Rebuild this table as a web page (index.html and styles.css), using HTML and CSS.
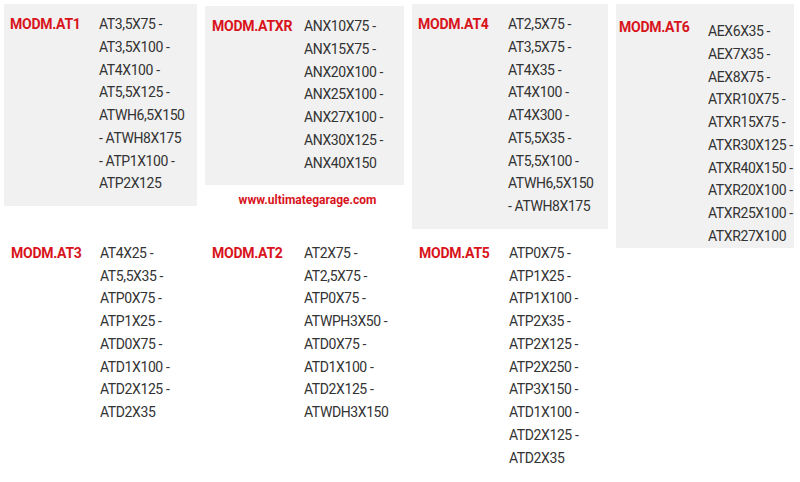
FILE: index.html
```html
<!DOCTYPE html>
<html>
<head>
<meta charset="utf-8">
<link rel="stylesheet" href="styles.css">
</head>
<body>
<main class="sheet">
  <section class="card col-1 r1">
    <h3 class="label">MODM.AT1</h3>
    <ul class="items">
      <li>AT3,5X75 -</li>
      <li>AT3,5X100 -</li>
      <li>AT4X100 -</li>
      <li>AT5,5X125 -</li>
      <li>ATWH6,5X150</li>
      <li>- ATWH8X175</li>
      <li>- ATP1X100 -</li>
      <li>ATP2X125</li>
    </ul>
  </section>

  <div class="stack col-2 r1">
    <section class="card card-atxr">
      <h3 class="label">MODM.ATXR</h3>
      <ul class="items">
        <li>ANX10X75 -</li>
        <li>ANX15X75 -</li>
        <li>ANX20X100 -</li>
        <li>ANX25X100 -</li>
        <li>ANX27X100 -</li>
        <li>ANX30X125 -</li>
        <li>ANX40X150</li>
      </ul>
    </section>
    <p class="site">www.ultimategarage.com</p>
  </div>

  <section class="card col-3 r1">
    <h3 class="label">MODM.AT4</h3>
    <ul class="items">
      <li>AT2,5X75 -</li>
      <li>AT3,5X75 -</li>
      <li>AT4X35 -</li>
      <li>AT4X100 -</li>
      <li>AT4X300 -</li>
      <li>AT5,5X35 -</li>
      <li>AT5,5X100 -</li>
      <li>ATWH6,5X150</li>
      <li>- ATWH8X175</li>
    </ul>
  </section>

  <section class="card col-4 card-at6">
    <h3 class="label">MODM.AT6</h3>
    <ul class="items">
      <li>AEX6X35 -</li>
      <li>AEX7X35 -</li>
      <li>AEX8X75 -</li>
      <li>ATXR10X75 -</li>
      <li>ATXR15X75 -</li>
      <li>ATXR30X125 -</li>
      <li>ATXR40X150 -</li>
      <li>ATXR20X100 -</li>
      <li>ATXR25X100 -</li>
      <li>ATXR27X100</li>
    </ul>
  </section>

  <section class="card plain col-1 r2">
    <h3 class="label">MODM.AT3</h3>
    <ul class="items">
      <li>AT4X25 -</li>
      <li>AT5,5X35 -</li>
      <li>ATP0X75 -</li>
      <li>ATP1X25 -</li>
      <li>ATD0X75 -</li>
      <li>ATD1X100 -</li>
      <li>ATD2X125 -</li>
      <li>ATD2X35</li>
    </ul>
  </section>

  <section class="card plain col-2 r2">
    <h3 class="label">MODM.AT2</h3>
    <ul class="items">
      <li>AT2X75 -</li>
      <li>AT2,5X75 -</li>
      <li>ATP0X75 -</li>
      <li>ATWPH3X50 -</li>
      <li>ATD0X75 -</li>
      <li>ATD1X100 -</li>
      <li>ATD2X125 -</li>
      <li>ATWDH3X150</li>
    </ul>
  </section>

  <section class="card plain col-3 r2">
    <h3 class="label">MODM.AT5</h3>
    <ul class="items">
      <li>ATP0X75 -</li>
      <li>ATP1X25 -</li>
      <li>ATP1X100 -</li>
      <li>ATP2X35 -</li>
      <li>ATP2X125 -</li>
      <li>ATP2X250 -</li>
      <li>ATP3X150 -</li>
      <li>ATD1X100 -</li>
      <li>ATD2X125 -</li>
      <li>ATD2X35</li>
    </ul>
  </section>
</main>
</body>
</html>
```

FILE: styles.css
```css
html, body {
  margin: 0;
  padding: 0;
  background: #ffffff;
}

body {
  font-family: Roboto, "Liberation Sans", Arial, sans-serif;
  color: #333333;
}

.sheet {
  display: grid;
  grid-template-columns: 193px 199px 196px 178px;
  grid-template-rows: auto auto;
  column-gap: 8px;
  row-gap: 4px;
  padding: 4px 0 0 4px;
  align-items: start;
}

.col-1 { grid-column: 1; --label-w: 89px; }
.col-2 { grid-column: 2; --label-w: 92px; }
.col-3 { grid-column: 3; --label-w: 90px; }
.col-4 { grid-column: 4; --label-w: 89px; }
.r1 { grid-row: 1; }
.r2 { grid-row: 2; }

.card {
  display: flex;
  align-items: flex-start;
  background: #f1f1f1;
  padding: 9px 0 11px 6px;
}

.card.plain {
  background: transparent;
  padding-left: 7px;
}

.stack {
  display: flex;
  flex-direction: column;
}

.card-atxr {
  margin-top: 2px;
  padding-left: 7px;
}

.card-at6 {
  grid-row: 1 / span 2;
  padding: 12px 0 0 3px;
}

.card-at6 .items {
  margin-top: 4px;
}

.label {
  flex: 0 0 var(--label-w);
  margin: 0;
  font-size: 14px;
  font-weight: 700;
  letter-spacing: -0.25px;
  line-height: 22.75px;
  color: #d8131c;
}

.items {
  list-style: none;
  margin: 0;
  padding: 0;
  font-size: 14px;
  letter-spacing: -0.4px;
  line-height: 22.75px;
  white-space: nowrap;
  color: #333333;
}

.site {
  margin: 8px 0 0;
  text-align: center;
  font-size: 12px;
  font-weight: 700;
  line-height: 15px;
  color: #d8131c;
  padding-left: 6px;
}
```
